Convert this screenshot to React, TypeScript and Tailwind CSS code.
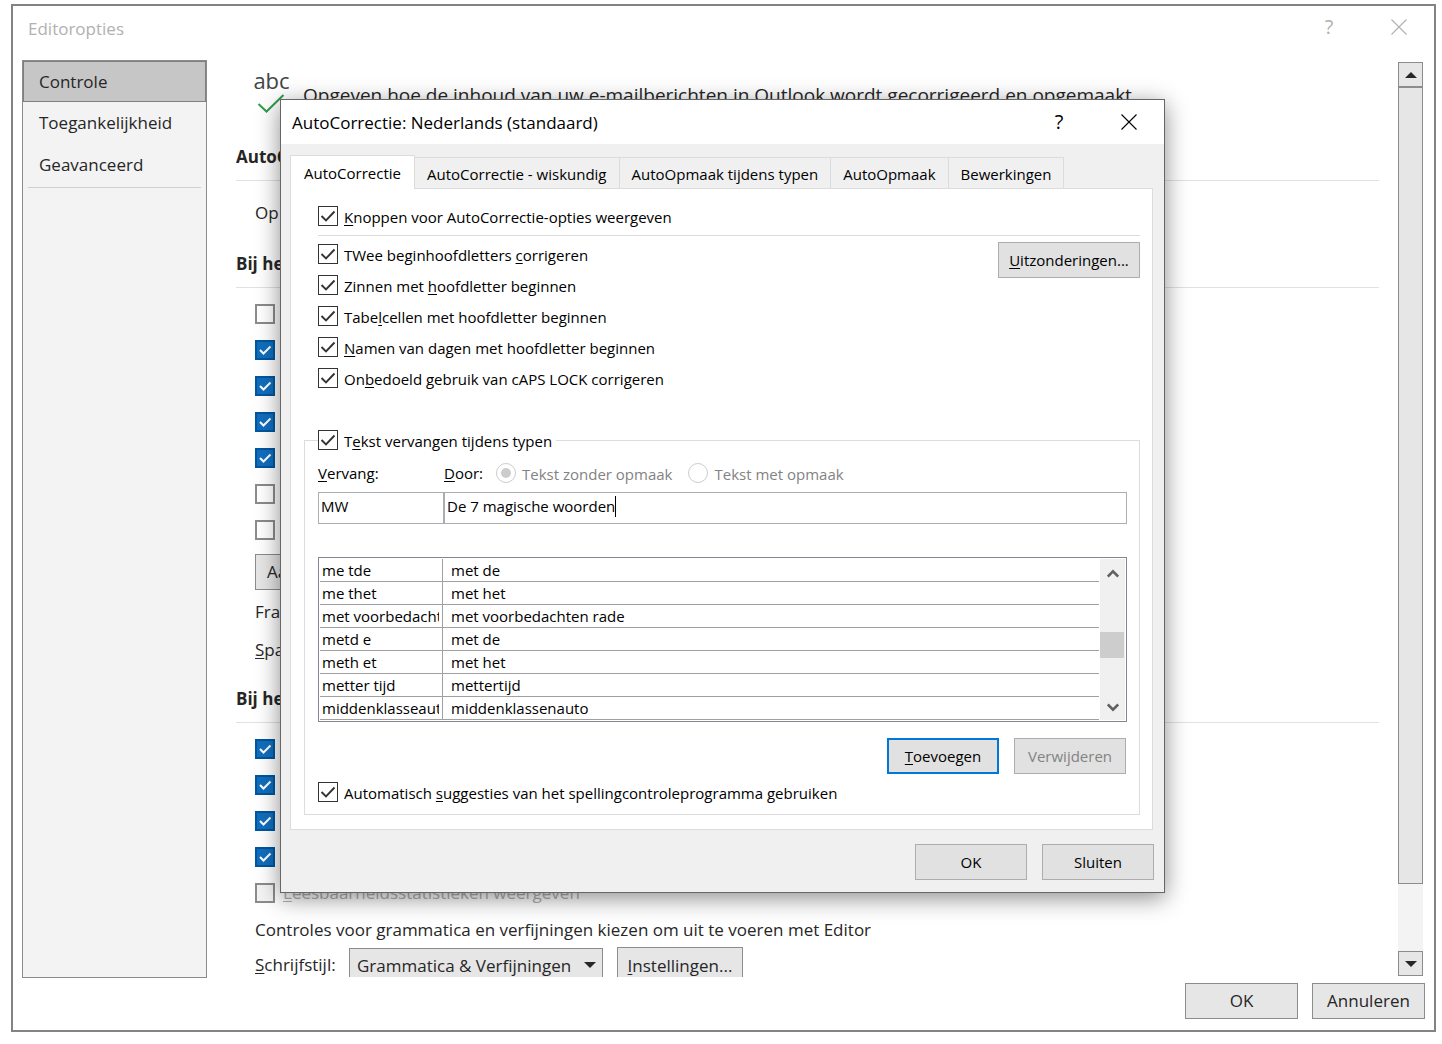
import type { ReactNode } from "react";

type Entry = { from: string; to: string };

const entries: Entry[] = [
  { from: "me tde", to: "met de" },
  { from: "me thet", to: "met het" },
  { from: "met voorbedachte rade", to: "met voorbedachten rade" },
  { from: "metd e", to: "met de" },
  { from: "meth et", to: "met het" },
  { from: "metter tijd", to: "mettertijd" },
  { from: "middenklasseauto", to: "middenklassenauto" },
];

const corrections = [
  "TWee beginhoofdletters &corrigeren",
  "Zinnen met &hoofdletter beginnen",
  "Tabe&lcellen met hoofdletter beginnen",
  "&Namen van dagen met hoofdletter beginnen",
  "On&bedoeld gebruik van cAPS LOCK corrigeren",
];

const tabs = [
  "AutoCorrectie - wiskundig",
  "AutoOpmaak tijdens typen",
  "AutoOpmaak",
  "Bewerkingen",
];

// "&" marks the access key, which is drawn underlined
function Mnemonic({ text }: { text: string }) {
  const at = text.indexOf("&");
  if (at < 0) return <>{text}</>;
  return (
    <span className="whitespace-pre">
      {text.slice(0, at)}
      <span className="underline decoration-1 underline-offset-2">{text[at + 1]}</span>
      {text.slice(at + 2)}
    </span>
  );
}

function CheckOption({ text }: { text: string }) {
  return (
    <label className="flex h-5 items-center gap-1.5">
      <span className="relative h-5 w-5 shrink-0">
        <input
          type="checkbox"
          defaultChecked
          className="peer block h-5 w-5 appearance-none border border-[#333333] bg-white"
        />
        <svg
          viewBox="0 0 20 20"
          className="pointer-events-none absolute inset-0 hidden h-5 w-5 peer-checked:block"
        >
          <path d="M3.5 10 L8 14.5 L16.5 5.5" fill="none" stroke="#333333" strokeWidth="1.9" />
        </svg>
      </span>
      <span className="pt-0.5">
        <Mnemonic text={text} />
      </span>
    </label>
  );
}

function OfficeCheck({ name, checked = false, disabled = false }: { name: string; checked?: boolean; disabled?: boolean }) {
  return (
    <span className="relative block h-5 w-5 shrink-0">
      <input
        type="checkbox"
        aria-label={name}
        defaultChecked={checked}
        disabled={disabled}
        className="peer block h-5 w-5 appearance-none border-2 border-[#8c8c8c] bg-white checked:border-[#00569e] checked:bg-[#106ebe] disabled:bg-[#f3f3f3]"
      />
      <svg
        viewBox="0 0 20 20"
        className="pointer-events-none absolute inset-0 hidden h-5 w-5 peer-checked:block"
      >
        <path d="M5 10 L8.5 13.5 L15.5 6.5" fill="none" stroke="#ffffff" strokeWidth="2" />
      </svg>
    </span>
  );
}

function DialogButton({ children, disabled = false }: { children: ReactNode; disabled?: boolean }) {
  return (
    <button
      type="button"
      disabled={disabled}
      className="h-9 w-28 border border-[#adadad] bg-[#e1e1e1] disabled:text-[#838383]"
    >
      {children}
    </button>
  );
}

function SectionTitle({ children }: { children: ReactNode }) {
  return (
    <h2 className="h-9 border-b border-[#e1e1e1] text-[17px] leading-6 font-bold whitespace-nowrap">
      {children}
    </h2>
  );
}

function CloseIcon() {
  return (
    <svg viewBox="0 0 16 16" className="h-4 w-4">
      <path d="M0.5 0.5 L15.5 15.5 M15.5 0.5 L0.5 15.5" fill="none" stroke="currentColor" strokeWidth="1.1" />
    </svg>
  );
}

function OptionsSidebar() {
  return (
    <nav className="w-[185px] shrink-0 border border-[#8b8b8b] bg-[#f3f3f3]">
      <button type="button" className="block h-[41px] w-full border border-[#7f7f7f] bg-[#c6c6c6] px-[15px] pt-px text-left">
        Controle
      </button>
      <button type="button" className="block h-[42px] w-full px-4 text-left">
        Toegankelijkheid
      </button>
      <button type="button" className="block h-[42px] w-full px-4 text-left">
        Geavanceerd
      </button>
      <hr className="mx-[5px] mt-px border-[#cfcfcf]" />
    </nav>
  );
}

function OptionsContent() {
  return (
    <main className="mb-px ml-[29px] flex-1 overflow-hidden">
      <div className="flex h-[85px] gap-3 pt-2 pl-4">
        <div className="flex w-[39px] shrink-0 flex-col items-center">
          <span className="text-[22px] leading-6 text-[#444444]">abc</span>
          <svg viewBox="0 0 28 20" className="mt-0.5 mr-0.5 h-5 w-7">
            <path d="M1.5 10 L9.5 17.5 L26.5 1" fill="none" stroke="#2f9e4f" strokeWidth="2" />
          </svg>
        </div>
        <p className="pt-[15px] text-[19px] leading-6 whitespace-nowrap">
          Opgeven hoe de inhoud van uw e-mailberichten in Outlook wordt gecorrigeerd en opgemaakt
        </p>
      </div>

      <SectionTitle>AutoCorrectie-opties</SectionTitle>
      <p className="pt-5 pl-[19px] leading-6">Op fouten controleren</p>

      <div className="pt-[27px]">
        <SectionTitle>Bij het corrigeren</SectionTitle>
      </div>
      <div className="flex flex-col items-start gap-4 pt-4 pl-[19px]">
        <OfficeCheck name="Optie 1" />
        <OfficeCheck name="Optie 2" checked />
        <OfficeCheck name="Optie 3" checked />
        <OfficeCheck name="Optie 4" checked />
        <OfficeCheck name="Optie 5" checked />
        <OfficeCheck name="Optie 6" />
        <OfficeCheck name="Optie 7" />
      </div>
      <div className="flex flex-col items-start pt-3.5 pl-[19px]">
        <button type="button" className="h-9 border border-[#8c8c8c] bg-[#e6e6e6] px-[11px]">
          Aangepast
        </button>
        <span className="pt-2.5 leading-6">Frans:</span>
        <span className="pt-3.5 leading-6">
          <Mnemonic text="&Spaans:" />
        </span>
      </div>

      <div className="pt-[25px]">
        <SectionTitle>Bij het corrigeren</SectionTitle>
      </div>
      <div className="flex flex-col items-start gap-4 pt-4 pl-[19px]">
        <OfficeCheck name="Optie 8" checked />
        <OfficeCheck name="Optie 9" checked />
        <OfficeCheck name="Optie 10" checked />
        <OfficeCheck name="Optie 11" checked />
        <div className="flex h-5 items-center gap-2 text-[#b1b1b1]">
          <OfficeCheck name="Leesbaarheidsstatistieken weergeven" disabled />
          <Mnemonic text="&Leesbaarheidsstatistieken weergeven" />
        </div>
      </div>
      <p className="pt-[15px] pl-[19px] leading-6 whitespace-nowrap">
        Controles voor grammatica en verfijningen kiezen om uit te voeren met Editor
      </p>
      <div className="flex items-start pt-[5px] pl-[19px]">
        <label htmlFor="style" className="w-[94px] pt-1.5 leading-6">
          <Mnemonic text="&Schrijfstijl:" />
        </label>
        <span className="relative pt-px">
          <select
            id="style"
            className="block h-9 w-[254px] appearance-none border border-[#8c8c8c] bg-[#e6e6e6] pl-[7px]"
          >
            <option>Grammatica &amp; Verfijningen</option>
          </select>
          <svg viewBox="0 0 12 6" className="pointer-events-none absolute top-[15px] right-[7px] h-1.5 w-3">
            <path d="M0 0 H12 L6 6 Z" fill="#262626" />
          </svg>
        </span>
        <button type="button" className="ml-3.5 h-9 w-[126px] border border-[#8c8c8c] bg-[#e6e6e6] pt-0.5">
          <Mnemonic text="&Instellingen..." />
        </button>
      </div>
    </main>
  );
}

function OptionsScrollbar() {
  return (
    <div className="mt-0.5 mr-[11px] mb-0.5 ml-[19px] flex w-[25px] shrink-0 flex-col bg-[#f3f3f3]">
      <button
        type="button"
        aria-label="Omhoog"
        className="flex h-[25px] items-center justify-center border border-[#8c8c8c] bg-[#e6e6e6]"
      >
        <svg viewBox="0 0 12 6" className="h-1.5 w-3">
          <path d="M0 6 H12 L6 0 Z" fill="#262626" />
        </svg>
      </button>
      <div className="h-[797px] border border-[#8c8c8c] bg-[#e6e6e6]" />
      <button
        type="button"
        aria-label="Omlaag"
        className="mt-auto flex h-[25px] items-center justify-center border border-[#8c8c8c] bg-[#e6e6e6]"
      >
        <svg viewBox="0 0 12 6" className="h-1.5 w-3">
          <path d="M0 0 H12 L6 6 Z" fill="#262626" />
        </svg>
      </button>
    </div>
  );
}

function EntryList() {
  return (
    <div className="mt-[33px] flex border border-[#828790] p-px">
      <table className="flex-1 table-fixed border-separate border-spacing-0">
        <tbody>
          {entries.map((entry) => (
            <tr key={entry.from} className="h-[23px]">
              <td className="w-[123px] border-r border-b border-[#a0a0a0] p-0 pl-0.5">
                <div className="w-[117px] overflow-hidden leading-[22px] whitespace-nowrap">{entry.from}</div>
              </td>
              <td className="border-b border-[#a0a0a0] p-0 pl-2 leading-[22px]">{entry.to}</td>
            </tr>
          ))}
        </tbody>
      </table>
      <div className="ml-px flex w-[25px] flex-col items-center bg-[#f0f0f0]">
        <svg viewBox="0 0 12 9" className="mt-2.5 h-[9px] w-3">
          <path d="M0.8 7.5 L6 2.3 L11.2 7.5" fill="none" stroke="#606060" strokeWidth="2.6" />
        </svg>
        <div className="mt-[54px] h-[26px] w-6 self-start bg-[#cdcdcd]" />
        <svg viewBox="0 0 12 9" className="mt-auto mb-2 h-[9px] w-3">
          <path d="M0.8 1.5 L6 6.7 L11.2 1.5" fill="none" stroke="#606060" strokeWidth="2.6" />
        </svg>
      </div>
    </div>
  );
}

function FormatRadio({ text, checked = false }: { text: string; checked?: boolean }) {
  return (
    <label className="mr-4 flex items-center gap-1.5 text-[#838383]">
      <span className="relative h-5 w-5">
        <input
          type="radio"
          name="format"
          defaultChecked={checked}
          disabled
          className="peer block h-5 w-5 appearance-none rounded-full border border-[#cccccc] bg-white"
        />
        <span className="absolute inset-[5px] hidden rounded-full bg-[#cccccc] peer-checked:block" />
      </span>
      <span className="pt-0.5">{text}</span>
    </label>
  );
}

function ReplaceGroup() {
  return (
    <fieldset className="mt-[42px] mr-3 ml-[13px] border border-[#dcdcdc] px-3 pb-3">
      <legend className="ml-px pr-1">
        <CheckOption text="T&ekst vervangen tijdens typen" />
      </legend>
      <div className="ml-px">
        <div className="mt-[13px] flex h-5 items-center">
          <label htmlFor="replace" className="w-[126px]">
            <Mnemonic text="&Vervang:" />
          </label>
          <label htmlFor="with" className="w-[52px]">
            <Mnemonic text="&Door:" />
          </label>
          <FormatRadio text="Tekst zonder opmaak" checked />
          <FormatRadio text="Tekst met opmaak" />
        </div>
        <div className="mt-[9px] flex">
          <div className="h-8 w-[126px] border border-[#abadb3] px-0.5 pt-[3px]">
            <input id="replace" defaultValue="MW" className="block h-5 w-full outline-none" />
          </div>
          <div className="-ml-px flex h-8 flex-1 border border-l-2 border-[#abadb3] px-0.5 pt-[3px]">
            <input id="with" defaultValue="De 7 magische woorden" className="block field-sizing-content h-5 outline-none" />
            <span className="h-[21px] w-px bg-black" />
          </div>
        </div>
        <EntryList />
        <div className="mt-4 mr-px flex justify-end gap-[15px]">
          <button type="button" className="h-9 w-28 border-2 border-[#0078d7] bg-[#e1e1e1]">
            <Mnemonic text="&Toevoegen" />
          </button>
          <DialogButton disabled>Verwijderen</DialogButton>
        </div>
        <div className="mt-2">
          <CheckOption text="Automatisch &suggesties van het spellingcontroleprogramma gebruiken" />
        </div>
      </div>
    </fieldset>
  );
}

function AutoCorrectDialog() {
  return (
    <section
      role="dialog"
      aria-labelledby="dialog-title"
      className="w-full max-w-[885px] border border-[#666666] bg-[#f0f0f0] text-[15px] leading-5 text-black shadow-[0_5px_22px_rgba(0,0,0,0.45)]"
    >
      <header className="flex h-11 items-center bg-white pl-[11px]">
        <h1 id="dialog-title" className="flex-1 pt-0.5 text-[17px]">
          AutoCorrectie: Nederlands (standaard)
        </h1>
        <button type="button" className="w-[70px] text-center text-xl">
          ?
        </button>
        <button type="button" aria-label="Sluiten" className="flex w-[70px] justify-center">
          <CloseIcon />
        </button>
      </header>

      <div className="px-[9px] pt-[11px] pb-3">
        <div role="tablist" className="flex items-end">
          <button
            type="button"
            role="tab"
            aria-selected="true"
            className="relative -mb-px h-[34px] w-[125px] border border-b-0 border-[#dcdcdc] bg-white"
          >
            AutoCorrectie
          </button>
          {tabs.map((tab) => (
            <button
              key={tab}
              type="button"
              role="tab"
              aria-selected="false"
              className="h-[31px] border border-b-0 border-l-0 border-[#dcdcdc] px-3 pt-0.5"
            >
              {tab}
            </button>
          ))}
        </div>

        <div role="tabpanel" className="mr-0.5 border border-[#dcdcdc] bg-white pt-[17px] pb-3.5">
          <div className="mr-3 ml-[27px]">
            <CheckOption text="&Knoppen voor AutoCorrectie-opties weergeven" />
            <hr className="mt-[9px] border-[#dcdcdc]" />
            <div className="flex items-start justify-between pt-1.5">
              <div className="flex flex-col gap-[11px] pt-0.5">
                {corrections.map((text) => (
                  <CheckOption key={text} text={text} />
                ))}
              </div>
              <button type="button" className="h-9 w-[142px] border border-[#adadad] bg-[#e1e1e1]">
                <Mnemonic text="&Uitzonderingen..." />
              </button>
            </div>
          </div>
          <ReplaceGroup />
        </div>

        <div className="mt-3.5 mr-px flex justify-end gap-[15px]">
          <DialogButton>OK</DialogButton>
          <DialogButton>Sluiten</DialogButton>
        </div>
      </div>
    </section>
  );
}

export default function App() {
  return (
    <div className="relative h-screen bg-white pt-1 pr-1.5 pb-3 pl-[11px] font-['Open_Sans','Noto_Sans',sans-serif] text-[17px] text-[#262626]">
      <div className="flex h-full flex-col border-2 border-[#838383] bg-white">
        <header className="flex h-[54px] shrink-0 items-start pt-[9px] text-[#b1b1b1]">
          <span className="flex-1 pl-[15px] leading-7">Editoropties</span>
          <button type="button" className="w-[70px] text-center text-xl leading-6">
            ?
          </button>
          <button type="button" aria-label="Sluiten" className="flex h-6 w-[70px] items-center justify-center">
            <CloseIcon />
          </button>
        </header>

        <div className="flex min-h-0 flex-1 pl-[9px]">
          <OptionsSidebar />
          <OptionsContent />
          <OptionsScrollbar />
        </div>

        <footer className="flex shrink-0 justify-end gap-3.5 pt-[5px] pr-[9px] pb-[11px]">
          <button type="button" className="h-9 w-[113px] border border-[#8c8c8c] bg-[#e6e6e6]">
            OK
          </button>
          <button type="button" className="h-9 w-[113px] border border-[#8c8c8c] bg-[#e6e6e6]">
            Annuleren
          </button>
        </footer>
      </div>

      <div className="absolute inset-0 flex items-start justify-center pt-[99px] pl-[3px]">
        <AutoCorrectDialog />
      </div>
    </div>
  );
}
